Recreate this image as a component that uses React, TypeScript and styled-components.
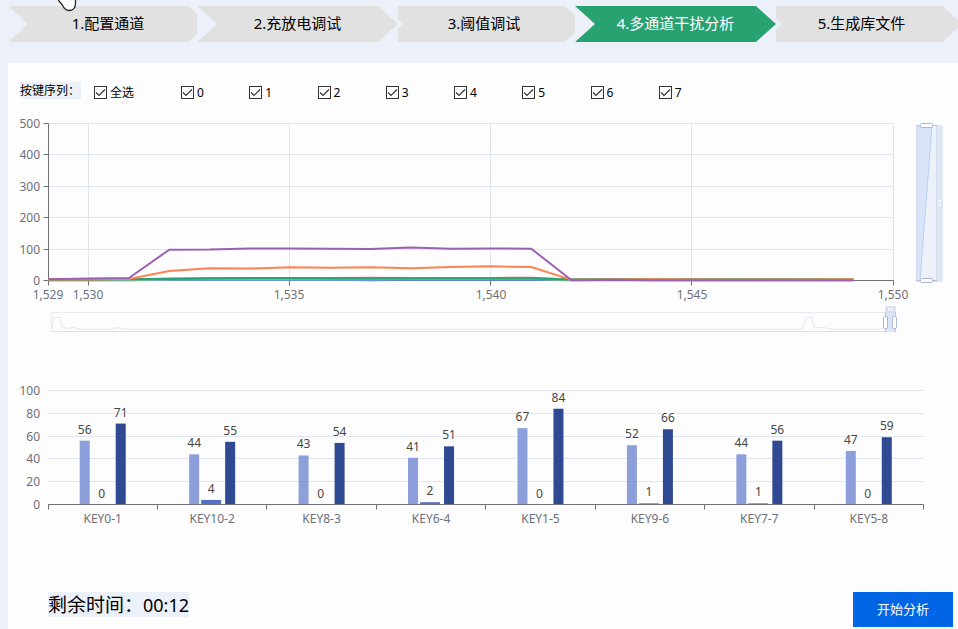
import React, { useState } from "react";
import styled, { createGlobalStyle } from "styled-components";

const FONT = '"Noto Sans", "Noto Sans CJK SC", sans-serif';

const GlobalStyle = createGlobalStyle`
  * { box-sizing: border-box; }
  body {
    margin: 0;
    background: #ecf0f9;
    color: #000;
    font-family: ${FONT};
    font-size: 12px;
  }
`;

const Page = styled.div`
  display: flex;
  flex-direction: column;
  min-height: 100vh;
  padding-left: 8px;
  overflow-x: hidden;
`;

const Steps = styled.nav`
  display: flex;
  margin: 6px 0 21px;
`;

type StepKind = "first" | "full" | "inner" | "last";

const stepShapes: Record<StepKind, string> = {
  first:
    "0 0, calc(100% - 9px) 0, 100% 8px, 100% 28px, calc(100% - 9px) 100%, 0 100%, 20px 50%",
  full: "0 0, calc(100% - 20px) 0, 100% 50%, calc(100% - 20px) 100%, 0 100%, 20px 50%",
  inner:
    "0 0, calc(100% - 10px) 0, 100% 9px, 100% 27px, calc(100% - 10px) 100%, 0 100%, 0 23px, 6px 50%, 0 13px",
  last: "0 0, calc(100% - 16px) 0, 100% 14px, 100% 22px, calc(100% - 16px) 100%, 0 100%, 0 23px, 6px 50%, 0 13px",
};

const stepPadding: Record<StepKind, string> = {
  first: "0 0 2px 11px",
  full: "0 0 2px",
  inner: "0 5px 2px 0",
  last: "0 11px 2px 0",
};

const Step = styled.button<{ $kind: StepKind; $basis: number; $active?: boolean }>`
  flex: 1 1 ${(p) => p.$basis}px;
  min-width: 0;
  height: 36px;
  padding: ${(p) => stepPadding[p.$kind]};
  border: 0;
  background: ${(p) => (p.$active ? "#29a272" : "#e1e1e1")};
  color: ${(p) => (p.$active ? "#fff" : "#000")};
  clip-path: polygon(${(p) => stepShapes[p.$kind]});
  font: 15px/20px ${FONT};
  white-space: nowrap;
  cursor: pointer;
`;

const Pointer = styled.svg`
  position: absolute;
  left: 57px;
  top: 0;
  pointer-events: none;
`;

const Panel = styled.main`
  flex: 1;
  display: flex;
  flex-direction: column;
  background: #fdfdfd;
`;

const Filters = styled.div`
  display: flex;
  align-items: center;
  padding: 19px 12px 0;
`;

const FilterLabel = styled.span`
  width: 61px;
  margin: 0 13px 3px 0;
  background: #ecf0f8;
  line-height: 17px;
  white-space: nowrap;
`;

const Choices = styled.div`
  display: grid;
  flex: 0 1 633px;
  grid-template-columns: 87px repeat(8, 1fr);
`;

const Choice = styled.label`
  display: flex;
  align-items: center;
  gap: 3px;
  line-height: 19px;
  white-space: nowrap;
`;

const ChoiceText = styled.span`
  padding-top: 1px;
`;

const Box = styled.input`
  appearance: none;
  width: 13px;
  height: 13px;
  margin: 0;
  border: 1px solid #333;
  background: #fff;

  &:checked {
    background: #fff
      url("data:image/svg+xml,%3Csvg xmlns='http://www.w3.org/2000/svg' viewBox='0 0 11 11'%3E%3Cpath d='M1 5.5 4 8.5 10 2.5' fill='none' stroke='%23333' stroke-width='1.2'/%3E%3C/svg%3E");
  }
`;

const Chart = styled.svg`
  display: block;
  width: 100%;
  height: auto;
  font-family: ${FONT};
  font-size: 12px;
`;

const AxisText = styled.text`
  fill: #6e7079;
`;

const ValueText = styled.text`
  fill: #464646;
  stroke: #fdfdfd;
  stroke-width: 2px;
  paint-order: stroke;
  text-anchor: middle;
`;

const ChartGap = styled.div`
  padding: 8px 0 40px;
`;

const Footer = styled.footer`
  display: flex;
  align-items: flex-start;
  justify-content: space-between;
  margin-top: auto;
  padding: 0 5px 2px 40px;
`;

const Remaining = styled.p`
  margin: 0;
  padding-top: 1px;
  background: #ecf0f8;
  font-size: 19px;
  line-height: 24px;
  white-space: nowrap;
`;

const Clock = styled.time`
  font-size: 18px;
`;

const StartButton = styled.button`
  width: 100px;
  height: 35px;
  padding: 0 0 2px;
  border: 0;
  background: #0166e6;
  color: #fff;
  font: 13px/20px ${FONT};
  cursor: pointer;
`;

const steps: { text: string; kind: StepKind; basis: number; active?: boolean }[] = [
  { text: "1.配置通道", kind: "first", basis: 189 },
  { text: "2.充放电调试", kind: "full", basis: 201 },
  { text: "3.阈值调试", kind: "inner", basis: 177 },
  { text: "4.多通道干扰分析", kind: "full", basis: 201, active: true },
  { text: "5.生成库文件", kind: "last", basis: 182 },
];

const choices = ["全选", "0", "1", "2", "3", "4", "5", "6", "7"];

const LINE = { left: 40.5, right: 885.5, top: 13.5, bottom: 170.5, min: 1529, max: 1550 };
const lineX = (v: number) =>
  LINE.left + ((v - LINE.min) / (LINE.max - LINE.min)) * (LINE.right - LINE.left);
const lineY = (v: number) => LINE.bottom - (v / 500) * (LINE.bottom - LINE.top);
const crisp = (v: number) => Math.floor(v) + 0.5;
const crispX = (v: number) => Math.round(v) - 0.5;

const series: { color: string; values: number[] }[] = [
  { color: "#5470c6", values: [1, 1, 1, 2, 2, 2, 2, 2, 1, 2, 2, 2, 2, 1, 1, 1, 1, 1, 1, 1, 1] },
  { color: "#fac858", values: [2, 2, 3, 5, 6, 7, 8, 7, 7, 7, 7, 7, 6, 2, 4, 4, 4, 4, 4, 4, 4] },
  { color: "#ee6666", values: [2, 2, 3, 6, 7, 8, 8, 8, 9, 8, 8, 8, 9, 3, 3, 3, 3, 3, 3, 3, 3] },
  { color: "#73c0de", values: [1, 1, 2, 3, 3, 3, 4, 3, 3, 4, 4, 4, 4, 3, 3, 3, 3, 3, 3, 3, 3] },
  { color: "#91cc75", values: [2, 2, 3, 4, 5, 5, 5, 5, 5, 5, 5, 5, 5, 3, 4, 3, 3, 4, 3, 4, 5] },
  { color: "#29a272", values: [2, 2, 4, 5, 6, 7, 7, 6, 6, 6, 6, 6, 6, 3, 4, 3, 3, 5, 4, 3, 3] },
  { color: "#fc8452", values: [3, 3, 5, 30, 39, 38, 42, 41, 42, 39, 43, 45, 43, 2, 3, 4, 3, 3, 3, 3, 4] },
  { color: "#9a60b4", values: [4, 6, 8, 98, 99, 102, 102, 101, 100, 105, 101, 102, 101, 1, 2, 1, 1, 1, 1, 1, 1] },
];

const toPoints = (values: number[]) =>
  values.map((v, i) => `${lineX(LINE.min + i)},${lineY(v)}`).join(" ");

function LineChart() {
  return (
    <Chart viewBox="0 0 950 230" role="img" aria-label="通道数据">
      <g stroke="#e0e6f1">
        {[100, 200, 300, 400, 500].map((v) => (
          <path key={v} d={`M${LINE.left} ${crisp(lineY(v))}H${LINE.right}`} />
        ))}
        {[1530, 1535, 1540, 1545, 1550].map((v) => (
          <path key={v} d={`M${crispX(lineX(v))} ${LINE.top}V${LINE.bottom}`} />
        ))}
      </g>
      <g stroke="#6e7079">
        <path d={`M${LINE.left} ${LINE.top}V${LINE.bottom}H${LINE.right}`} fill="none" />
        {[0, 100, 200, 300, 400, 500].map((v) => (
          <path key={v} d={`M${LINE.left - 5} ${crisp(lineY(v))}H${LINE.left}`} />
        ))}
        {[1529, 1530, 1535, 1540, 1545, 1550].map((v) => (
          <path key={v} d={`M${crispX(lineX(v))} ${LINE.bottom}v5`} />
        ))}
      </g>
      {[0, 100, 200, 300, 400, 500].map((v) => (
        <AxisText key={v} x={32} y={Math.floor(lineY(v)) + 5} textAnchor="end">
          {v}
        </AxisText>
      ))}
      {[1529, 1530, 1535, 1540, 1545, 1550].map((v) => (
        <AxisText key={v} x={Math.floor(lineX(v))} y={189} textAnchor="middle">
          {v.toLocaleString("en-US")}
        </AxisText>
      ))}
      {series.map((s) => (
        <polyline
          key={s.color}
          points={toPoints(s.values)}
          fill="none"
          stroke={s.color}
          strokeWidth={2}
          strokeLinejoin="bevel"
        />
      ))}

      {/* horizontal zoom slider */}
      <g fill="none">
        <rect x={43.5} y={202.5} width={844} height={19} rx={2} stroke="#e3eaf6" />
        <path d="M44 221.5H887" stroke="#d9e2f2" />
        <path
          d="M44 218.5 46 207.5H52L54 217.5L60 218.5L65 217.5 71 219H105L109 217.5 114 219H795L798 207.5H804L806 218L815 217.5 824 219H877"
          stroke="#e1eaf6"
        />
        <rect x={877} y={202} width={11} height={20} fill="#dce5f6" />
        <rect x={877} y={196} width={11} height={7} rx={2} fill="#d8e0f0" />
        <path d="M880.5 198v3M882.5 198v3M884.5 198v3" stroke="#fff" />
        <path d="M877.5 202v20M887.5 202v20" stroke="#b7c6e3" />
        <rect x={875.5} y={206.5} width={4} height={12} rx={1} fill="#fff" stroke="#acb8d1" />
        <rect x={884.5} y={206.5} width={4} height={12} rx={1} fill="#fff" stroke="#acb8d1" />
      </g>

      {/* vertical zoom slider */}
      <g fill="none">
        <rect x={928} y={15} width={7} height={157} rx={2} fill="#dfe6f3" />
        <rect x={908.5} y={15.5} width={20} height={156} fill="#ecf1fa" stroke="#d2dbee" />
        <path d="M909 16H924L912 171H909Z" fill="#d9e4f8" />
        <path d="M924 16 912 171" stroke="#bccff7" />
        <path d="M930 90.5h3M930 93.5h3M930 95.5h3" stroke="#fff" />
        <path d="M909 15.5h20M909 170.5h20" stroke="#b7c6e3" />
        <rect x={912.5} y={13.5} width={12} height={4} rx={1} fill="#fff" stroke="#acb8d1" />
        <rect x={912.5} y={168.5} width={12} height={4} rx={1} fill="#fff" stroke="#acb8d1" />
      </g>
    </Chart>
  );
}

const keys: { name: string; low: number; mid: number; high: number }[] = [
  { name: "KEY0-1", low: 56, mid: 0, high: 71 },
  { name: "KEY10-2", low: 44, mid: 4, high: 55 },
  { name: "KEY8-3", low: 43, mid: 0, high: 54 },
  { name: "KEY6-4", low: 41, mid: 2, high: 51 },
  { name: "KEY1-5", low: 67, mid: 0, high: 84 },
  { name: "KEY9-6", low: 52, mid: 1, high: 66 },
  { name: "KEY7-7", low: 44, mid: 1, high: 56 },
  { name: "KEY5-8", low: 47, mid: 0, high: 59 },
];

const BAR = { left: 40, right: 915.5, top: 10.5, bottom: 124.5 };
const barY = (v: number) => BAR.bottom - (v / 100) * (BAR.bottom - BAR.top);
const band = (BAR.right - BAR.left) / keys.length;

function BarChart() {
  return (
    <Chart viewBox="0 0 950 160" role="img" aria-label="按键干扰">
      {[20, 40, 60, 80, 100].map((v) => (
        <path key={v} d={`M${BAR.left} ${crisp(barY(v))}H${BAR.right}`} stroke="#e0e6f1" />
      ))}
      {[0, 20, 40, 60, 80, 100].map((v) => (
        <AxisText key={v} x={32} y={Math.floor(barY(v)) + 5} textAnchor="end">
          {v}
        </AxisText>
      ))}
      {keys.map((k, i) => {
        const center = BAR.left + band * (i + 0.5);
        const bars = [
          { value: k.low, offset: -23, width: 10, color: "#8d9fda" },
          { value: k.mid, offset: -11, width: 20, color: "#5470c6" },
          { value: k.high, offset: 13, width: 10, color: "#2f4992" },
        ];
        return (
          <g key={k.name}>
            {bars.map((b) => (
              <rect
                key={b.offset}
                x={center + b.offset}
                y={barY(b.value)}
                width={b.width}
                height={BAR.bottom - barY(b.value)}
                fill={b.color}
              />
            ))}
            {bars.map((b) => (
              <ValueText
                key={b.offset}
                x={center + b.offset + b.width / 2}
                y={Math.round(barY(b.value)) - 7}
              >
                {b.value}
              </ValueText>
            ))}
            <AxisText x={center} y={143} textAnchor="middle">
              {k.name}
            </AxisText>
          </g>
        );
      })}
      <path d={`M${BAR.left} ${BAR.bottom}H${BAR.right}`} stroke="#6e7079" />
      {Array.from({ length: keys.length + 1 }, (_, i) => (
        <path
          key={i}
          d={`M${crisp(BAR.left + band * i)} ${BAR.bottom}v5`}
          stroke="#6e7079"
        />
      ))}
    </Chart>
  );
}

export default function App() {
  const [checked, setChecked] = useState<boolean[]>(choices.map(() => true));
  const toggle = (index: number) =>
    setChecked((now) => {
      if (index === 0) return now.map(() => !now[0]);
      const next = now.map((v, i) => (i === index ? !v : v));
      next[0] = next.slice(1).every(Boolean);
      return next;
    });

  return (
    <Page>
      <GlobalStyle />
      <Steps>
        {steps.map((s) => (
          <Step key={s.text} type="button" $kind={s.kind} $basis={s.basis} $active={s.active}>
            {s.text}
          </Step>
        ))}
      </Steps>
      <Pointer width="20" height="12" viewBox="0 0 20 12" aria-hidden="true">
        <path
          d="M1.5-1C1 1 3.5 2.5 5 4.5 6.5 7.5 8 10.5 12 10.5 16 10.5 18.5 7.5 18.5 3.5V-2Z"
          fill="#fff"
          stroke="#222"
          strokeWidth="1.3"
        />
      </Pointer>
      <Panel>
        <Filters>
          <FilterLabel>按键序列：</FilterLabel>
          <Choices>
            {choices.map((c, i) => (
              <Choice key={c}>
                <Box type="checkbox" checked={checked[i]} onChange={() => toggle(i)} />
                <ChoiceText>{c}</ChoiceText>
              </Choice>
            ))}
          </Choices>
        </Filters>
        <ChartGap>
          <LineChart />
        </ChartGap>
        <BarChart />
        <Footer>
          <Remaining>
            剩余时间：<Clock>00:12</Clock>
          </Remaining>
          <StartButton type="button">开始分析</StartButton>
        </Footer>
      </Panel>
    </Page>
  );
}
